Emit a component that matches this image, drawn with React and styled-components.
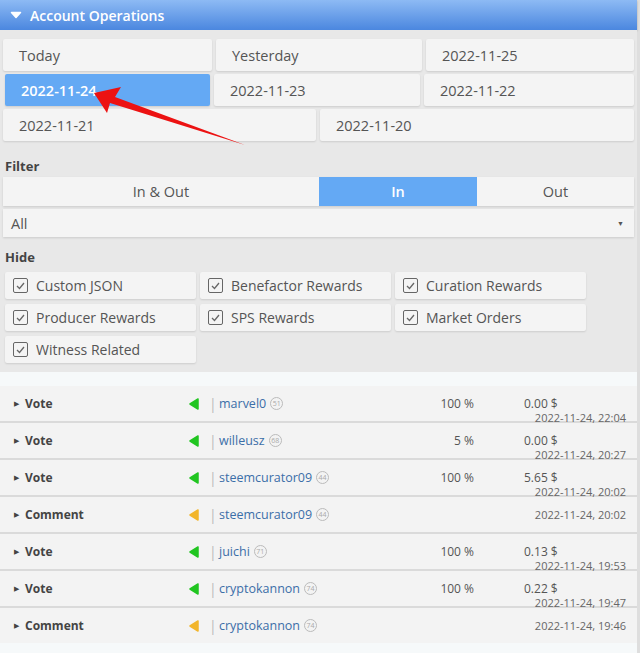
import React from 'react'
import styled, { createGlobalStyle } from 'styled-components'

const GlobalStyle = createGlobalStyle`
  html, body {
    margin: 0;
    padding: 0;
    background: #f6f9fa;
  }
  body {
    font-family: 'Open Sans', 'Noto Sans', sans-serif;
    color: #555;
  }
`

const Page = styled.div`
  position: relative;
  width: 637px;
  min-height: 653px;
  border-right: 3px solid #dedede;
  background: #f6f9fa;
`

const Header = styled.div`
  height: 30px;
  display: flex;
  align-items: center;
  gap: 8px;
  padding-left: 10px;
  background: linear-gradient(#8dbaf4, #4b87df);
  color: #fff;
  font-size: 14px;
  font-weight: 600;
  box-shadow: 0 1px 2px rgba(0, 0, 0, 0.25);
`

const Panel = styled.div`
  background: #e8e8e8;
  padding: 9px 3px 9px 3px;
`

const DateGrid = styled.div`
  display: grid;
  grid-template-columns: ${(p) => p.$cols};
  gap: 4px;
  margin-bottom: 3px;
`

const DateButton = styled.div`
  height: 32px;
  display: flex;
  align-items: center;
  padding-left: 16px;
  font-size: 14.5px;
  border-radius: 2px;
  background: ${(p) => (p.$active ? '#64a9f4' : '#f4f4f4')};
  color: ${(p) => (p.$active ? '#fff' : '#555')};
  font-weight: ${(p) => (p.$active ? 600 : 400)};
  box-shadow: 0 1px 2px rgba(0, 0, 0, 0.12);
  margin-left: ${(p) => (p.$active ? '2px' : '0')};
`

const Label = styled.div`
  font-size: 13px;
  line-height: 18px;
  font-weight: 700;
  color: #444;
  padding-left: 2px;
  margin: ${(p) => p.$margin};
`

const Toggle = styled.div`
  display: grid;
  grid-template-columns: 316px 158px 1fr;
  height: 29px;
  box-shadow: 0 1px 2px rgba(0, 0, 0, 0.12);
`

const ToggleItem = styled.div`
  display: flex;
  align-items: center;
  justify-content: center;
  font-size: 14.5px;
  background: ${(p) => (p.$active ? '#64a9f4' : '#f4f4f4')};
  color: ${(p) => (p.$active ? '#fff' : '#555')};
  font-weight: ${(p) => (p.$active ? 600 : 400)};
`

const Select = styled.div`
  margin-top: 3px;
  height: 28px;
  display: flex;
  align-items: center;
  justify-content: space-between;
  padding: 0 10px 0 8px;
  background: #f4f4f4;
  font-size: 14.5px;
  color: #555;
  box-shadow: 0 1px 2px rgba(0, 0, 0, 0.12);
`

const SelectArrow = styled.span`
  font-size: 7px;
  color: #555;
`

const HideGrid = styled.div`
  display: grid;
  grid-template-columns: repeat(3, 191px);
  column-gap: 4px;
  row-gap: 5px;
  padding-left: 2px;
`

const CheckItem = styled.div`
  height: 27px;
  display: flex;
  align-items: center;
  gap: 8px;
  padding-left: 8px;
  font-size: 14px;
  color: #555;
  background: #f4f4f4;
  border-radius: 2px;
  box-shadow: 0 1px 2px rgba(0, 0, 0, 0.12);
`

const Box = styled.span`
  width: 13px;
  height: 13px;
  border: 1.5px solid #666;
  border-radius: 2px;
  display: flex;
  align-items: center;
  justify-content: center;
`

const List = styled.div`
  margin-top: 14px;
`

const Row = styled.div`
  display: grid;
  grid-template-columns: 11px 164px 20px 10px 1fr 60px 50px 102px;
  height: 35px;
  padding: 0 11px 0 14px;
  background: #f3f3f3;
  border-bottom: 2px solid #dadada;
  font-size: 12px;
  align-items: start;
  &:last-child {
    border-bottom: none;
  }
`

const Cell = styled.div`
  height: 35px;
  display: flex;
  align-items: center;
  justify-content: ${(p) => (p.$right ? 'flex-end' : 'flex-start')};
`

const Caret = styled.span`
  font-size: 7px;
  color: #444;
`

const OpType = styled.span`
  font-weight: 700;
  color: #444;
`

const Pipe = styled.span`
  color: #bbb;
  font-size: 14px;
`

const User = styled.span`
  color: #3b6ea8;
  font-size: 12.5px;
  display: flex;
  align-items: center;
  gap: 4px;
`

const Rep = styled.span`
  width: 11px;
  height: 11px;
  border: 1px solid #bbb;
  border-radius: 50%;
  font-size: 7px;
  color: #aaa;
  display: inline-flex;
  align-items: center;
  justify-content: center;
`

const Value = styled.div`
  height: 35px;
  display: flex;
  flex-direction: column;
  justify-content: ${(p) => (p.$single ? 'center' : 'flex-start')};
  padding-top: ${(p) => (p.$single ? '0' : '11px')};
  box-sizing: border-box;
`

const Amount = styled.div`
  line-height: 14px;
`

const Stamp = styled.div`
  font-size: 11px;
  color: #666;
  text-align: right;
  line-height: 14px;
`

const Overlay = styled.svg`
  position: absolute;
  left: 0;
  top: 0;
  pointer-events: none;
`

const Check = () => (
  <Box>
    <svg width="9" height="8" viewBox="0 0 9 8">
      <path d="M1 4 L3.5 6.5 L8 1" fill="none" stroke="#666" strokeWidth="1.3" />
    </svg>
  </Box>
)

const Tri = ({ color }) => (
  <svg width="10" height="12" viewBox="0 0 10 12">
    <path d="M9 1 L9 11 L1 6 Z" fill={color} stroke={color} strokeLinejoin="round" strokeWidth="1.5" />
  </svg>
)

const ops = [
  { type: 'Vote', user: 'marvel0', rep: 51, pct: '100 %', amount: '0.00 $', date: '2022-11-24, 22:04' },
  { type: 'Vote', user: 'willeusz', rep: 68, pct: '5 %', amount: '0.00 $', date: '2022-11-24, 20:27' },
  { type: 'Vote', user: 'steemcurator09', rep: 44, pct: '100 %', amount: '5.65 $', date: '2022-11-24, 20:02' },
  { type: 'Comment', user: 'steemcurator09', rep: 44, date: '2022-11-24, 20:02' },
  { type: 'Vote', user: 'juichi', rep: 71, pct: '100 %', amount: '0.13 $', date: '2022-11-24, 19:53' },
  { type: 'Vote', user: 'cryptokannon', rep: 74, pct: '100 %', amount: '0.22 $', date: '2022-11-24, 19:47' },
  { type: 'Comment', user: 'cryptokannon', rep: 74, date: '2022-11-24, 19:46' }
]

const hides = [
  'Custom JSON',
  'Benefactor Rewards',
  'Curation Rewards',
  'Producer Rewards',
  'SPS Rewards',
  'Market Orders',
  'Witness Related'
]

export default function App() {
  return (
    <Page>
      <GlobalStyle />
      <Header>
        <svg width="12" height="8" viewBox="0 0 12 8">
          <path d="M1.5 1.5 L10.5 1.5 L6 6.5 Z" fill="#fff" stroke="#fff" strokeLinejoin="round" strokeWidth="1.5" />
        </svg>
        Account Operations
      </Header>
      <Panel>
        <DateGrid $cols="209px 206px 1fr">
          <DateButton>Today</DateButton>
          <DateButton>Yesterday</DateButton>
          <DateButton>2022-11-25</DateButton>
        </DateGrid>
        <DateGrid $cols="207px 206px 1fr">
          <DateButton $active>2022-11-24</DateButton>
          <DateButton>2022-11-23</DateButton>
          <DateButton>2022-11-22</DateButton>
        </DateGrid>
        <DateGrid $cols="313px 1fr">
          <DateButton>2022-11-21</DateButton>
          <DateButton>2022-11-20</DateButton>
        </DateGrid>
        <Label $margin="16px 0 2px">Filter</Label>
        <Toggle>
          <ToggleItem>In &amp; Out</ToggleItem>
          <ToggleItem $active>In</ToggleItem>
          <ToggleItem>Out</ToggleItem>
        </Toggle>
        <Select>
          All
          <SelectArrow>▼</SelectArrow>
        </Select>
        <Label $margin="11px 0 6px">Hide</Label>
        <HideGrid>
          {hides.map((h) => (
            <CheckItem key={h}>
              <Check />
              {h}
            </CheckItem>
          ))}
        </HideGrid>
      </Panel>
      <List>
        {ops.map((op, i) => (
          <Row key={i}>
            <Cell>
              <Caret>▶</Caret>
            </Cell>
            <Cell>
              <OpType>{op.type}</OpType>
            </Cell>
            <Cell>
              <Tri color={op.type === 'Vote' ? '#21c521' : '#f2b52a'} />
            </Cell>
            <Cell>
              <Pipe>|</Pipe>
            </Cell>
            <Cell>
              <User>
                {op.user}
                <Rep>{op.rep}</Rep>
              </User>
            </Cell>
            <Cell $right>{op.pct}</Cell>
            <Cell />
            <Value $single={!op.amount}>
              {op.amount && <Amount>{op.amount}</Amount>}
              <Stamp>{op.date}</Stamp>
            </Value>
          </Row>
        ))}
      </List>
      <Overlay width="640" height="653" viewBox="0 0 640 653">
        <polygon points="94,93 121,87 115,97 245,145 110,103 107,113" fill="#ec1212" />
      </Overlay>
    </Page>
  )
}
